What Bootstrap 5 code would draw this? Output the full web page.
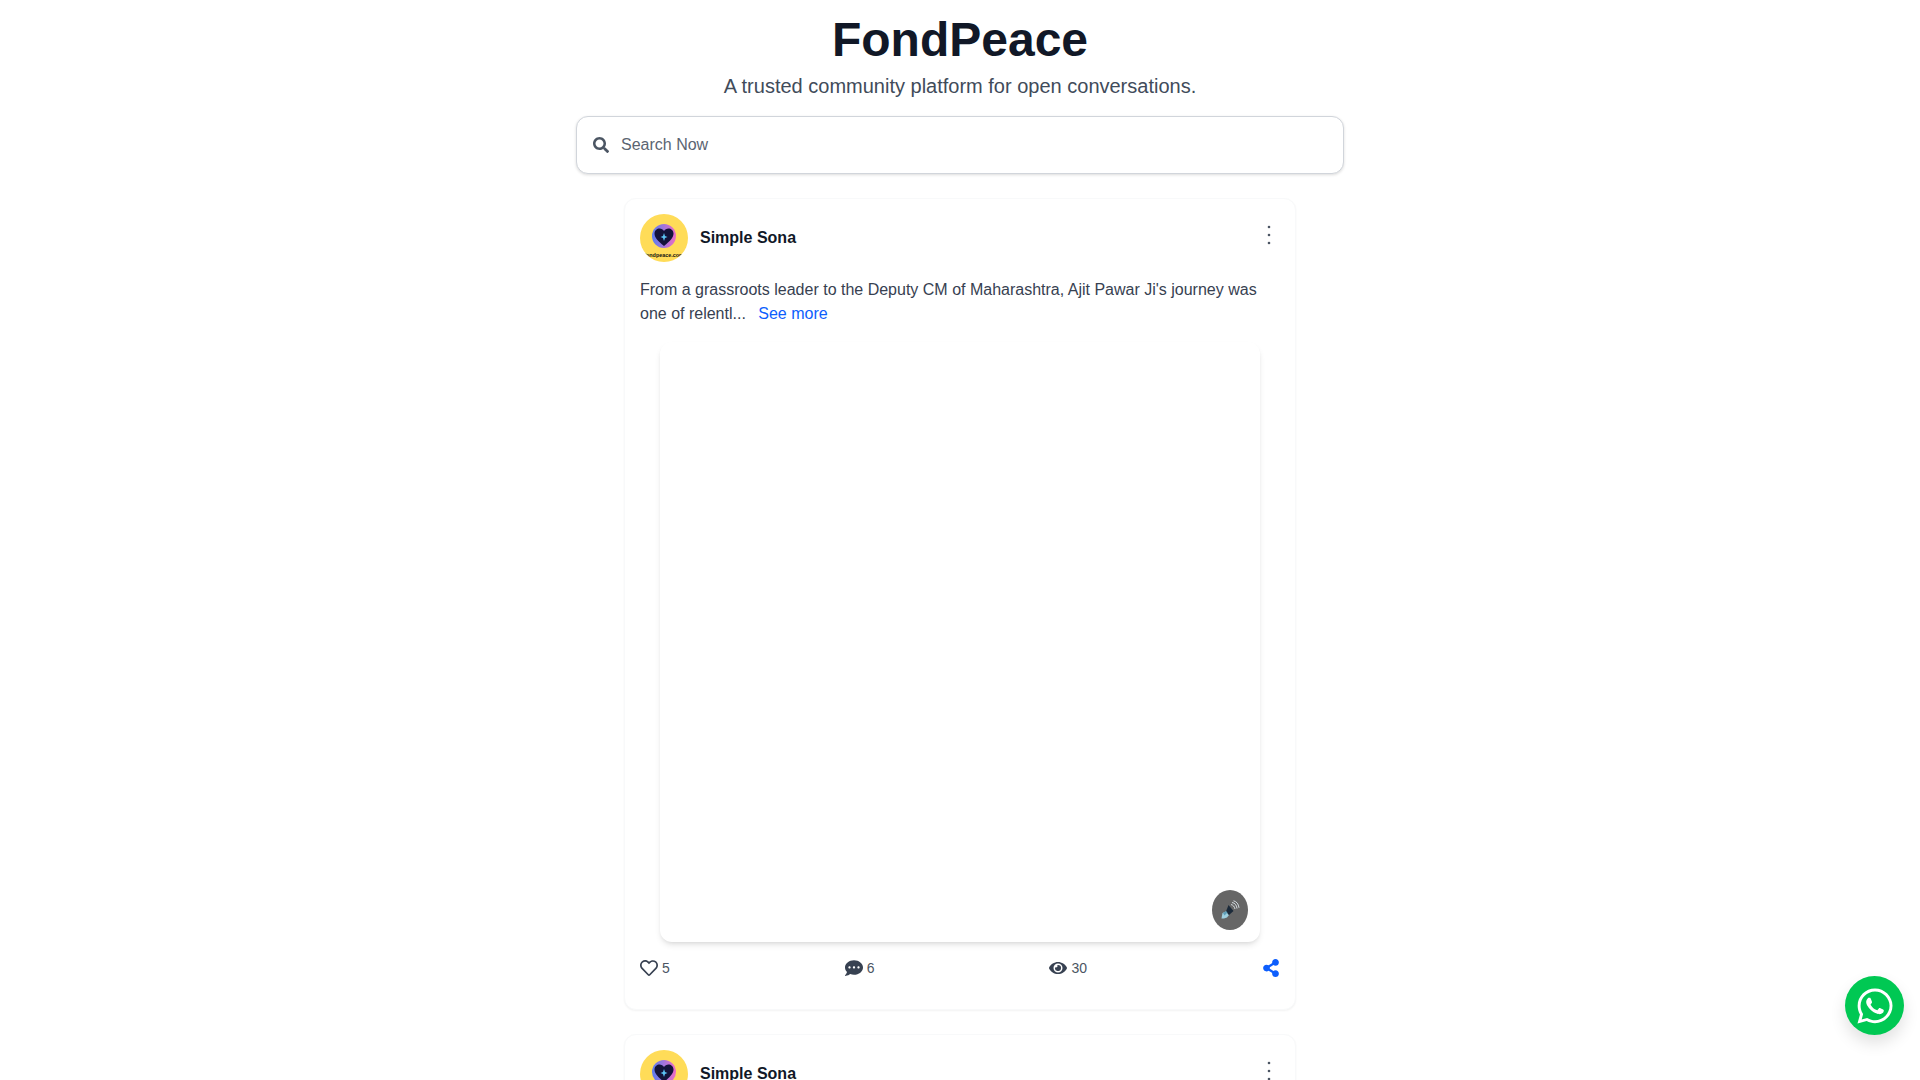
<!DOCTYPE html>
<html lang="en">
<head>
<meta charset="utf-8">
<title>FondPeace</title>
<link href="https://cdn.jsdelivr.net/npm/bootstrap@5.3.0/dist/css/bootstrap.min.css" rel="stylesheet">
<style>
html,body{height:100%;overflow:hidden}
body{font-family:"Liberation Sans",Arial,sans-serif;background:#fff;color:#374151;font-size:16px}
.page-head{padding-top:16px}
.site-title{font-size:48px;line-height:48px;font-weight:700;color:#111827;margin:0}
.site-sub{font-size:20px;line-height:28px;color:#414b5a;margin:8px 0 0}
.search-box{width:768px;height:58px;margin:16px auto 0;border:1px solid #d1d5db;border-radius:12px;padding:0 16px;box-shadow:0 1px 3px rgba(0,0,0,.14);background:#fff}
.search-box svg{width:16px;height:16px;fill:#4b5563;flex:none}
.search-input{border:0;outline:0;flex:1;font:16px/24px "Liberation Sans",Arial,sans-serif;color:#374151;background:transparent;padding:0}
.search-input::placeholder{color:#5b6472;opacity:1}
.post-list{width:672px;margin:24px auto 0}
.post-card{border:1px solid #f8f9fa;border-radius:12px;box-shadow:0 1px 2px rgba(0,0,0,.05);margin-bottom:24px;padding:15px 15px 29px}
.avatar-disc{width:48px;height:48px;background:#ffdc58;position:relative;flex:none;overflow:hidden}
.avatar-mark{position:absolute;left:10px;top:9px;width:28px;height:28px}
.avatar-url{position:absolute;left:0;right:0;top:38px;text-align:center;font-size:5.4px;line-height:6px;font-weight:700;color:#111;white-space:nowrap}
.author-name{font-weight:700;color:#111827;margin-left:12px}
.more-dots{width:20px;height:24px;margin-top:-6px;margin-right:1px}
.post-text{margin:16px 0 0;line-height:24px;color:#374151}
.see-more{color:#0d5efd;text-decoration:none;margin-left:8px}
.video-box{width:600px;height:600px;margin:16px auto 0;border-radius:12px;background:#fff;box-shadow:0 4px 6px -1px rgba(0,0,0,.1),0 2px 4px -2px rgba(0,0,0,.1);position:relative}
.mute-btn{position:absolute;right:12px;bottom:12px;width:36px;height:40px;border-radius:50%;background:#666}
.action-row{height:24px;margin-top:14px;font-size:14px;color:#4b5563}
.action-item{display:flex;align-items:center;gap:4px}
.action-item svg{fill:#374151;display:block}
.share-icon{fill:#0d5efd !important}
.wa-btn{position:fixed;right:16px;bottom:45px;width:59px;height:59px;background:#00c853;box-shadow:0 8px 16px rgba(0,0,0,.12)}
</style>
</head>
<body>
<header class="page-head text-center">
  <h1 class="site-title">FondPeace</h1>
  <p class="site-sub">A trusted community platform for open conversations.</p>
  <div class="search-box d-flex align-items-center gap-2">
    <svg viewBox="0 0 512 512"><path d="M505 442.7L405.3 343c-4.500-4.500-10.600-7-17-7H372c27.600-35.300 44-79.700 44-128C416 93.100 322.900 0 208 0S0 93.100 0 208s93.100 208 208 208c48.300 0 92.700-16.400 128-44v16.300c0 6.400 2.500 12.500 7 17l99.700 99.700c9.400 9.400 24.600 9.400 33.900 0l28.300-28.300c9.400-9.400 9.400-24.600.1-34zM208 336c-70.700 0-128-57.200-128-128 0-70.700 57.200-128 128-128 70.700 0 128 57.200 128 128 0 70.700-57.200 128-128 128z"/></svg>
    <input class="search-input ms-1" type="text" placeholder="Search Now">
  </div>
</header>

<main class="post-list">
  <article class="post-card card">
    <div class="d-flex justify-content-between align-items-center">
      <div class="d-flex align-items-center">
        <div class="avatar-disc rounded-circle">
          <svg class="avatar-mark" viewBox="0 0 28 28"><defs><linearGradient id="ag" x1="0" y1="0" x2="1" y2="0"><stop offset="0" stop-color="#5a7df0"/><stop offset="1" stop-color="#ee6cc4"/></linearGradient></defs><circle cx="14" cy="13" r="12" fill="url(#ag)"/><path d="M14 23C8 18 4.500 14.500 4.500 10.500 4.500 7.500 7 5.500 9.500 5.500 11.500 5.500 13 6.500 14 8 15 6.500 16.500 5.500 18.500 5.500 21 5.500 23.500 7.500 23.500 10.500 23.500 14.500 20 18 14 23z" fill="#14133a"/><path d="M14 10l1 3 2.500 1-2.500 1-1 3-1-3-2.500-1 2.500-1z" fill="#5cc4f5"/></svg>
          <div class="avatar-url">fondpeace.com</div>
        </div>
        <span class="author-name">Simple Sona</span>
      </div>
      <svg class="more-dots" viewBox="0 0 20 24"><circle cx="10" cy="4" r="1.300" fill="#4b5563"/><circle cx="10" cy="12" r="1.300" fill="#4b5563"/><circle cx="10" cy="20" r="1.300" fill="#4b5563"/></svg>
    </div>
    <p class="post-text">From a grassroots leader to the Deputy CM of Maharashtra, Ajit Pawar Ji's journey was one of relentl... <a class="see-more" href="#">See more</a></p>
    <div class="video-box">
      <div class="mute-btn d-flex align-items-center justify-content-center">
        <svg width="20" height="20" viewBox="0 0 20 20"><path d="M1.500 18.500l1-5.500 3.500-1.500 3 3.500-2 2.500-3 1z" fill="#9fd0e0"/><path d="M6 11.500L8.500 5 13.500 11l-4.500 4z" fill="#1b2a3a"/><path d="M3 13l3-2 1.500 1.500-3 3z" fill="#5f9fb8"/><path d="M11 4.500c2 .5 3.500 2 4 4.500M12 2.500c3 .5 4.500 2.500 5 6M13.500.8c3 .7 5 3 5.500 7" fill="none" stroke="#d3dbe0" stroke-width="1"/></svg>
      </div>
    </div>
    <div class="action-row d-flex justify-content-between align-items-center">
      <div class="action-item"><svg width="18" height="18" viewBox="0 0 512 512"><path d="M458.400 64.300C400.600 15.700 311.300 23 256 79.300 200.700 23 111.400 15.600 53.600 64.300-21.600 127.600-10.600 230.800 43 285.500l175.400 178.700c10 10.200 23.400 15.900 37.600 15.900 14.300 0 27.600-5.600 37.600-15.800L469 285.600c53.500-54.700 64.700-157.900-10.600-221.300zm-23.600 187.500L259.400 430.500c-2.400 2.400-4.400 2.400-6.800 0L77.200 251.800c-36.500-37.200-43.900-107.600 7.300-150.700 38.900-32.700 98.900-27.800 136.500 10.500l35 35.700 35-35.700c37.800-38.500 97.800-43.200 136.500-10.600 51.100 43.100 43.500 113.900 7.300 150.800z"/></svg><span>5</span></div>
      <div class="action-item"><svg width="18" height="18" viewBox="0 0 512 512"><path d="M256 32C114.600 32 0 125.100 0 240c0 49.600 21.400 95 57 130.700C44.500 421.100 2.700 466 2.200 466.500c-2.200 2.300-2.800 5.700-1.500 8.700S4.800 480 8 480c66.300 0 116-31.800 140.600-51.400 32.700 12.300 69 19.400 107.400 19.400 141.400 0 256-93.100 256-208S397.400 32 256 32zM128 272c-17.700 0-32-14.300-32-32s14.300-32 32-32 32 14.300 32 32-14.300 32-32 32zm128 0c-17.700 0-32-14.300-32-32s14.300-32 32-32 32 14.300 32 32-14.300 32-32 32zm128 0c-17.700 0-32-14.300-32-32s14.300-32 32-32 32 14.300 32 32-14.300 32-32 32z"/></svg><span>6</span></div>
      <div class="action-item"><svg width="18" height="18" viewBox="0 0 576 512"><path d="M572.520 241.400C518.290 135.590 410.930 64 288 64S57.680 135.640 3.480 241.410a32.350 32.350 0 0 0 0 29.190C57.710 376.410 165.070 448 288 448s230.320-71.640 284.520-177.410a32.350 32.350 0 0 0 0-29.190zM288 400a144 144 0 1 1 144-144 143.930 143.930 0 0 1-144 144zm0-240a95.310 95.310 0 0 0-25.310 3.790 47.850 47.850 0 0 1-66.900 66.900A95.780 95.780 0 1 0 288 160z"/></svg><span>30</span></div>
      <div class="action-item"><svg class="share-icon" width="18" height="18" viewBox="0 0 448 512"><path d="M352 320c-22.608 0-43.387 7.819-59.790 20.895l-102.486-64.054a96.551 96.551 0 0 0 0-41.683l102.486-64.054C308.613 184.181 329.392 192 352 192c53.019 0 96-42.981 96-96S405.019 0 352 0s-96 42.981-96 96c0 7.158.79 14.130 2.276 20.841L155.790 180.895C139.387 167.819 118.608 160 96 160c-53.019 0-96 42.981-96 96s42.981 96 96 96c22.608 0 43.387-7.819 59.790-20.895l102.486 64.054A96.301 96.301 0 0 0 256 416c0 53.019 42.981 96 96 96s96-42.981 96-96-42.981-96-96-96z"/></svg></div>
    </div>
  </article>

  <article class="post-card card">
    <div class="d-flex justify-content-between align-items-center">
      <div class="d-flex align-items-center">
        <div class="avatar-disc rounded-circle">
          <svg class="avatar-mark" viewBox="0 0 28 28"><circle cx="14" cy="13" r="12" fill="url(#ag)"/><path d="M14 23C8 18 4.500 14.500 4.500 10.500 4.500 7.500 7 5.500 9.500 5.500 11.500 5.500 13 6.500 14 8 15 6.500 16.500 5.500 18.500 5.500 21 5.500 23.500 7.500 23.500 10.500 23.500 14.500 20 18 14 23z" fill="#14133a"/><path d="M14 10l1 3 2.500 1-2.500 1-1 3-1-3-2.500-1 2.500-1z" fill="#5cc4f5"/></svg>
          <div class="avatar-url">fondpeace.com</div>
        </div>
        <span class="author-name">Simple Sona</span>
      </div>
      <svg class="more-dots" viewBox="0 0 20 24"><circle cx="10" cy="4" r="1.300" fill="#4b5563"/><circle cx="10" cy="12" r="1.300" fill="#4b5563"/><circle cx="10" cy="20" r="1.300" fill="#4b5563"/></svg>
    </div>
  </article>
</main>

<a class="wa-btn rounded-circle d-flex align-items-center justify-content-center" href="#" aria-label="WhatsApp">
  <svg width="40" height="40" viewBox="0 0 448 512" fill="#fff"><path d="M380.900 97.100C339 55.100 283.200 32 223.900 32c-122.400 0-222 99.600-222 222 0 39.100 10.200 77.300 29.600 111L0 480l117.700-30.900c32.400 17.700 68.900 27 106.100 27h.1c122.300 0 224.100-99.600 224.100-222 0-59.300-25.200-115-67.100-157zm-157 341.600c-33.200 0-65.700-8.900-94-25.700l-6.700-4-69.800 18.300L72 359.200l-4.400-7c-18.500-29.400-28.200-63.300-28.200-98.200 0-101.700 82.800-184.500 184.600-184.500 49.300 0 95.600 19.200 130.400 54.100 34.800 34.900 56.200 81.200 56.100 130.500 0 101.800-84.900 184.600-186.600 184.600zm101.200-138.200c-5.500-2.800-32.800-16.200-37.900-18-5.100-1.900-8.800-2.800-12.500 2.800-3.700 5.600-14.300 18-17.600 21.800-3.200 3.700-6.500 4.200-12 1.400-32.600-16.300-54-29.100-75.500-66-5.700-9.800 5.700-9.100 16.300-30.300 1.800-3.700.9-6.900-.5-9.700-1.400-2.800-12.500-30.100-17.100-41.200-4.500-10.800-9.100-9.300-12.500-9.500-3.200-.2-6.900-.2-10.600-.2-3.700 0-9.700 1.400-14.800 6.900-5.100 5.600-19.400 19-19.400 46.300 0 27.300 19.900 53.700 22.600 57.400 2.800 3.700 39.100 59.700 94.800 83.800 35.200 15.200 49 16.500 66.600 13.900 10.700-1.600 32.800-13.400 37.400-26.400 4.600-13 4.600-24.100 3.200-26.400-1.300-2.500-5-3.900-10.500-6.600z"/></svg>
</a>
<script src="https://cdn.jsdelivr.net/npm/bootstrap@5.3.0/dist/js/bootstrap.bundle.min.js"></script>
</body>
</html>
